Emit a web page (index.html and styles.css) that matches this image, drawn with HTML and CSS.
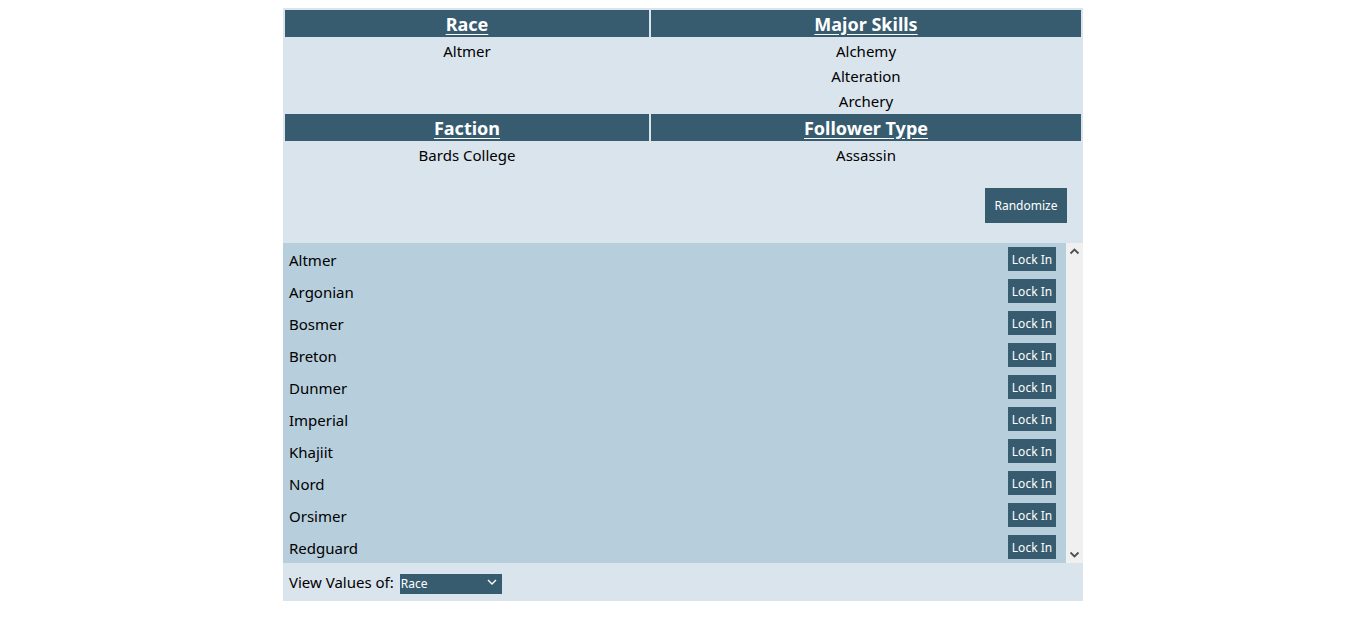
FILE: index.html
```html
<!DOCTYPE html>
<html>
<head>
<meta charset="utf-8">
<link rel="stylesheet" href="styles.css">
</head>
<body>
<div class="app">
  <div class="summary">
    <div class="head"><span>Race</span></div>
    <div class="head"><span>Major Skills</span></div>
    <div class="cell first"><div>Altmer</div></div>
    <div class="cell first"><div>Alchemy</div><div>Alteration</div><div>Archery</div></div>
    <div class="head"><span>Faction</span></div>
    <div class="head"><span>Follower Type</span></div>
    <div class="cell"><div>Bards College</div></div>
    <div class="cell"><div>Assassin</div><div class="actions"><button class="randomize">Randomize</button></div></div>
  </div>
  <div class="list-wrap">
    <div class="list">
      <div class="row"><span>Altmer</span><button class="lock">Lock In</button></div>
      <div class="row"><span>Argonian</span><button class="lock">Lock In</button></div>
      <div class="row"><span>Bosmer</span><button class="lock">Lock In</button></div>
      <div class="row"><span>Breton</span><button class="lock">Lock In</button></div>
      <div class="row"><span>Dunmer</span><button class="lock">Lock In</button></div>
      <div class="row"><span>Imperial</span><button class="lock">Lock In</button></div>
      <div class="row"><span>Khajiit</span><button class="lock">Lock In</button></div>
      <div class="row"><span>Nord</span><button class="lock">Lock In</button></div>
      <div class="row"><span>Orsimer</span><button class="lock">Lock In</button></div>
      <div class="row"><span>Redguard</span><button class="lock">Lock In</button></div>
    </div>
    <div class="scrollbar">
      <svg width="17" height="17" viewBox="0 0 17 17"><path d="M4.5 10.5 L8.5 6.5 L12.5 10.5" fill="none" stroke="#505050" stroke-width="1.8"/></svg>
      <svg width="17" height="17" viewBox="0 0 17 17"><path d="M4.5 6.5 L8.5 10.5 L12.5 6.5" fill="none" stroke="#505050" stroke-width="1.8"/></svg>
    </div>
  </div>
  <div class="footer">
    <span>View Values of:</span>
    <div class="select-wrap">
      <select class="select">
        <option>Race</option>
        <option>Major Skills</option>
        <option>Faction</option>
        <option>Follower Type</option>
      </select>
      <svg class="chev" width="10" height="6" viewBox="0 0 10 6"><path d="M1 1 L5 5 L9 1" fill="none" stroke="#fff" stroke-width="1.4"/></svg>
    </div>
  </div>
</div>
</body>
</html>
```
FILE: styles.css
```css
body {
  margin: 8px;
  font-family: "Noto Sans", "Open Sans", sans-serif;
  font-size: 15px;
  color: #000;
  background: #fff;
}
.app {
  width: 800px;
  margin: 0 auto;
}
.summary {
  display: grid;
  grid-template-columns: 364px 1fr;
  gap: 2px;
  padding: 2px;
  background: #dae4ed;
}
.head {
  height: 27px;
  background: #375c6f;
  color: #fff;
  font-weight: bold;
  font-size: 18px;
  line-height: 27px;
  text-align: center;
  padding-top: 1px;
  box-sizing: border-box;
}
.head span {
  text-decoration: underline;
  text-underline-offset: 3px;
}
.cell {
  text-align: center;
  line-height: 25px;
}
.cell.first {
  height: 73px;
}
.actions {
  display: flex;
  justify-content: flex-end;
  padding: 20px 14px 18px 0;
}
.randomize {
  width: 82px;
  height: 35px;
  border: none;
  background: #375c6f;
  color: #fff;
  font-family: inherit;
  font-size: 12px;
  padding: 0;
}
.list-wrap {
  display: flex;
  height: 320px;
  background: #b7cedc;
}
.list {
  flex: 1;
  overflow: hidden;
}
.scrollbar {
  width: 17px;
  background: #f0f0f0;
  display: flex;
  flex-direction: column;
  justify-content: space-between;
}
.scrollbar svg {
  display: block;
}
.row {
  height: 32px;
  display: flex;
  align-items: center;
  justify-content: space-between;
  padding: 0 10px 0 6px;
}
.row span {
  padding-top: 2px;
}
.lock {
  width: 48px;
  height: 24px;
  border: none;
  background: #375c6f;
  color: #fff;
  font-family: inherit;
  font-size: 12px;
  padding: 0;
}
.footer {
  height: 38px;
  background: #dae4ed;
  display: flex;
  align-items: center;
  gap: 6px;
  padding: 0 6px;
}
.select-wrap {
  position: relative;
  width: 102px;
  height: 20px;
}
.select {
  appearance: none;
  -webkit-appearance: none;
  width: 102px;
  height: 20px;
  border: none;
  border-radius: 0;
  background: #375c6f;
  color: #fff;
  font-family: inherit;
  font-size: 12px;
  padding: 0 0 0 1px;
  outline: none;
}
.chev {
  position: absolute;
  right: 5px;
  top: 7px;
  pointer-events: none;
}
```
